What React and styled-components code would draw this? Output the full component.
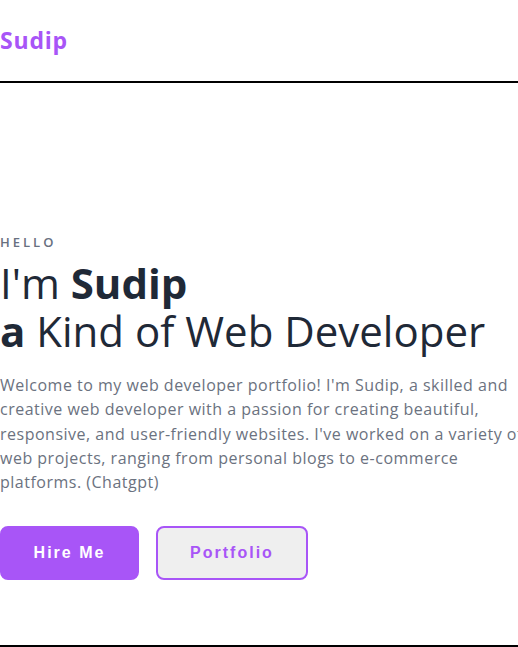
import React from 'react';
import styled, { createGlobalStyle } from 'styled-components';

const GlobalStyle = createGlobalStyle`
  body {
    margin: 0;
    font-family: "Open Sans", "Liberation Sans", sans-serif;
    background: #ffffff;
    overflow: hidden;
  }
`;

const Page = styled.div`
  width: 540px;
`;

const Header = styled.header`
  height: 81px;
  display: flex;
  align-items: center;
  border-bottom: 2px solid #000;
  width: 518px;
`;

const Logo = styled.a`
  font-size: 23px;
  font-weight: 700;
  letter-spacing: 0.8px;
  color: #a855f7;
  text-decoration: none;
  margin-top: -1px;
`;

const Hero = styled.section`
  height: 564px;
  padding-top: 150px;
  box-sizing: border-box;
  border-bottom: 2px solid #000;
  width: 518px;
`;

const Content = styled.div`
  width: 540px;
`;

const Eyebrow = styled.p`
  margin: 0;
  font-size: 13px;
  font-weight: 600;
  letter-spacing: 3px;
  color: #687080;
`;

const Title = styled.h1`
  margin: 8px 0 0;
  font-size: 42px;
  font-weight: 400;
  line-height: 48px;
  color: #1f2937;

  strong {
    font-weight: 700;
  }
`;

const Intro = styled.p`
  margin: 18px 0 0;
  font-size: 16px;
  line-height: 24.3px;
  letter-spacing: 0.5px;
  color: #6b7280;
`;

const Actions = styled.div`
  display: flex;
  gap: 17px;
  margin-top: 32px;
`;

const Button = styled.button`
  height: 54px;
  width: ${({ $w }) => $w}px;
  border-radius: 8px;
  font-family: "Liberation Sans", Arial, sans-serif;
  font-size: 16px;
  font-weight: 700;
  letter-spacing: 2px;
  cursor: pointer;
  border: 2px solid #a855f7;
  background: ${({ $primary }) => ($primary ? '#a855f7' : '#efefef')};
  color: ${({ $primary }) => ($primary ? '#ffffff' : '#a855f7')};
`;

export default function App() {
  return (
    <Page>
      <GlobalStyle />
      <Header>
        <Logo href="#">Sudip</Logo>
      </Header>
      <Hero>
        <Content>
          <Eyebrow>HELLO</Eyebrow>
          <Title>
            I'm <strong>Sudip</strong>
            <br />
            <strong>a</strong> Kind of Web Developer
          </Title>
          <Intro>
            Welcome to my web developer portfolio! I'm Sudip, a skilled and creative web developer
            with a passion for creating beautiful, responsive, and user-friendly websites. I've
            worked on a variety of web projects, ranging from personal blogs to e-commerce
            platforms. (Chatgpt)
          </Intro>
          <Actions>
            <Button $primary $w={139}>Hire Me</Button>
            <Button $w={152}>Portfolio</Button>
          </Actions>
        </Content>
      </Hero>
    </Page>
  );
}
